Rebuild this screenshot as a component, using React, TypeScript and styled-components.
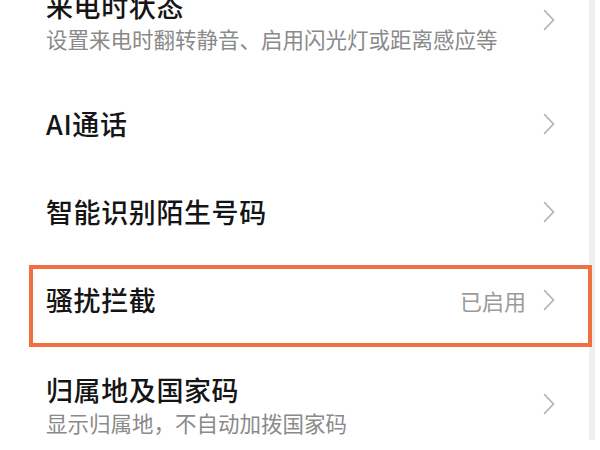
import React from 'react';
import styled, { createGlobalStyle } from 'styled-components';

const GlobalStyle = createGlobalStyle`
  html, body {
    margin: 0;
    padding: 0;
    background: #fff;
  }
  body {
    font-family: "Noto Sans CJK SC", "Noto Sans", sans-serif;
  }
`;

interface Item {
  title: string;
  subtitle?: string;
  value?: string;
  highlighted?: boolean;
}

const ITEMS: Item[] = [
  { title: '来电时状态', subtitle: '设置来电时翻转静音、启用闪光灯或距离感应等' },
  { title: 'AI通话' },
  { title: '智能识别陌生号码' },
  { title: '骚扰拦截', value: '已启用', highlighted: true },
  { title: '归属地及国家码', subtitle: '显示归属地，不自动加拨国家码' },
];

function Chevron() {
  return (
    <ChevronIcon width="12" height="22" viewBox="0 0 12 22">
      <polyline points="1.5,1.5 10.5,11 1.5,20.5" />
    </ChevronIcon>
  );
}

function App() {
  return (
    <>
      <GlobalStyle />
      <Page>
        <List>
          {ITEMS.map(item => (
            <Row key={item.title} $tall={!!item.subtitle}>
              <Texts>
                <Title>{item.title}</Title>
                {item.subtitle && <Subtitle>{item.subtitle}</Subtitle>}
              </Texts>
              <Trailing>
                {item.value && <Value>{item.value}</Value>}
                <Chevron />
              </Trailing>
              {item.highlighted && <Highlight />}
            </Row>
          ))}
        </List>
        <ScrollTrack />
      </Page>
    </>
  );
}

const Page = styled.div`
  width: 600px;
  height: 450px;
  overflow: hidden;
  display: flex;
  align-items: flex-start;
  background: #fff;
`;

const List = styled.ul`
  list-style: none;
  margin: -40px 0 0;
  padding: 0;
  width: 589px;
  flex-shrink: 0;
`;

const Row = styled.li<{ $tall: boolean }>`
  position: relative;
  height: ${props => (props.$tall ? 120 : 88)}px;
  display: flex;
  align-items: center;
  justify-content: space-between;
  padding: 0 34px 0 46px;
  box-sizing: border-box;
`;

const Texts = styled.div`
  display: flex;
  flex-direction: column;
  gap: 1px;
`;

const Title = styled.div`
  font-size: 27px;
  line-height: 36px;
  font-weight: 500;
  letter-spacing: 0.6px;
  color: #151515;
`;

const Subtitle = styled.div`
  font-size: 21.5px;
  line-height: 28px;
  color: #8a8a8a;
`;

const Trailing = styled.div`
  display: flex;
  align-items: center;
  gap: 17px;
`;

const Value = styled.span`
  font-size: 22px;
  color: #9a9a9a;
`;

const ChevronIcon = styled.svg`
  display: block;
  fill: none;
  stroke: #b0b0b0;
  stroke-width: 1.6;
  stroke-linecap: round;
  stroke-linejoin: round;
`;

const Highlight = styled.div`
  position: absolute;
  left: 29px;
  top: 9px;
  right: -3px;
  bottom: -3px;
  border: 4px solid #f07044;
  pointer-events: none;
`;

const ScrollTrack = styled.div`
  width: 6px;
  height: 440px;
  background: #efefef;
  flex-shrink: 0;
`;

export default App;
